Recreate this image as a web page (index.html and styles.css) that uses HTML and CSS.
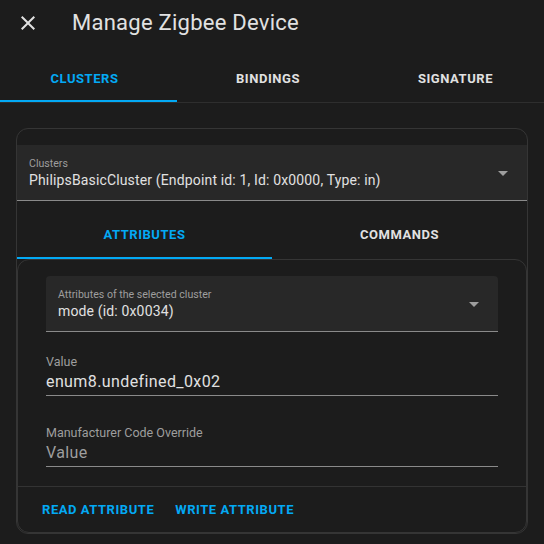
FILE: index.html
```html
<!DOCTYPE html>
<html lang="en">
<head>
<meta charset="utf-8">
<title>Manage Zigbee Device</title>
<link rel="stylesheet" href="styles.css">
</head>
<body>
<div class="dialog">
  <header class="head">
    <button class="close" aria-label="Close">
      <svg viewBox="0 0 24 24" width="24" height="24"><path d="M19,6.41L17.59,5L12,10.59L6.41,5L5,6.41L10.59,12L5,17.59L6.41,19L12,13.41L17.59,19L19,17.59L13.41,12L19,6.41Z"/></svg>
    </button>
    <h1 class="title">Manage Zigbee Device</h1>
  </header>
  <nav class="tabs tabs-top">
    <div class="tab tab-first active">Clusters</div>
    <div class="tab tab-mid">Bindings</div>
    <div class="tab tab-last">Signature</div>
  </nav>
  <main class="content">
    <section class="card">
      <div class="select">
        <div class="select-text">
          <div class="select-label">Clusters</div>
          <div class="select-value">PhilipsBasicCluster (Endpoint id: 1, Id: 0x0000, Type: in)</div>
        </div>
        <svg class="arrow" viewBox="0 0 24 24" width="24" height="24"><path d="M7 10l5 5 5-5z"/></svg>
      </div>
      <nav class="tabs tabs-inner">
        <div class="tab active">Attributes</div>
        <div class="tab">Commands</div>
      </nav>
      <div class="subcard">
        <div class="subcontent">
          <div class="select select-inner">
            <div class="select-text">
              <div class="select-label">Attributes of the selected cluster</div>
              <div class="select-value">mode (id: 0x0034)</div>
            </div>
            <svg class="arrow" viewBox="0 0 24 24" width="24" height="24"><path d="M7 10l5 5 5-5z"/></svg>
          </div>
          <div class="field field-value">
            <div class="field-label">Value</div>
            <div class="field-input">enum8.undefined_0x02</div>
          </div>
          <div class="field field-code">
            <div class="field-label">Manufacturer Code Override</div>
            <div class="field-input placeholder">Value</div>
          </div>
        </div>
        <div class="actions">
          <button class="btn">Read Attribute</button>
          <button class="btn">Write Attribute</button>
        </div>
      </div>
    </section>
  </main>
</div>
</body>
</html>
```
FILE: styles.css
```css
* { box-sizing: border-box; }
html, body {
  margin: 0;
  background: #1c1c1c;
  font-family: Roboto, "Noto Sans", "Liberation Sans", sans-serif;
  color: #e1e1e1;
}
.dialog { width: 544px; }
.head {
  height: 46px;
  display: flex;
  align-items: center;
  padding-left: 16px;
}
.close {
  width: 24px;
  height: 24px;
  padding: 0;
  margin: 0;
  border: 0;
  background: none;
  display: flex;
}
.close svg { fill: #e1e1e1; }
.title {
  margin: 0 0 0 32px;
  font-size: 22px;
  line-height: 28px;
  font-weight: 400;
  letter-spacing: 0.25px;
  color: #e1e1e1;
}
.tabs { display: flex; }
.tabs-top {
  margin-top: 8px;
  border-bottom: 1px solid #2e2e2e;
}
.tabs-inner { margin-top: 10px; }
.tab {
  flex: 1 1 0;
  height: 48px;
  display: flex;
  align-items: center;
  justify-content: center;
  padding: 2px 0 0;
  border-bottom: 2px solid transparent;
  font-size: 13px;
  font-weight: 700;
  letter-spacing: 0.55px;
  text-transform: uppercase;
  color: #e1e1e1;
}
.tabs-top .tab-first { flex: 0 0 177px; padding-right: 8px; }
.tabs-top .tab-mid { flex: 0 0 182px; }
.tabs-top .tab-last { flex: 1 1 auto; padding-left: 8px; }
.tabs-inner .tab { padding-top: 0; }
.tab.active {
  color: #03a9f4;
  border-bottom-color: #03a9f4;
}
.content { padding: 25px 16px 0; }
.card {
  border: 1px solid #353535;
  border-radius: 12px;
  padding-top: 16px;
}
.select {
  height: 56px;
  display: flex;
  background: #282828;
  border-bottom: 1px solid #8a8a8a;
  padding: 13px 0 0 12px;
}
.select-inner { border-radius: 4px 4px 0 0; }
.select-text { flex: 1 1 auto; min-width: 0; }
.select-label {
  font-size: 10.6px;
  line-height: 12px;
  color: #9e9e9e;
}
.select-value {
  font-size: 14px;
  line-height: 20px;
  letter-spacing: 0.15px;
  color: #e1e1e1;
  white-space: nowrap;
}
.arrow {
  flex: none;
  margin: 3px 12px 0 0;
  fill: #9e9e9e;
}
.subcard {
  border: 1px solid #353535;
  border-radius: 12px;
}
.subcontent { padding: 16px 28px 19px; }
.field { border-bottom: 1px solid #8a8a8a; padding-bottom: 1px; }
.field-value { margin-top: 22px; }
.field-code { margin-top: 29px; }
.field-label {
  font-size: 12.5px;
  line-height: 16px;
  color: #9e9e9e;
}
.field-input {
  font-size: 16px;
  line-height: 24px;
  letter-spacing: 0.4px;
  color: #e1e1e1;
}
.field-input.placeholder { color: #9e9e9e; }
.actions {
  height: 46px;
  border-top: 1px solid #333333;
  display: flex;
  align-items: center;
  gap: 5px;
  padding-left: 16px;
}
.btn {
  height: 36px;
  padding: 0 8px;
  border: 0;
  background: none;
  font-family: inherit;
  font-size: 13px;
  font-weight: 700;
  letter-spacing: 0.55px;
  text-transform: uppercase;
  color: #03a9f4;
}
```
